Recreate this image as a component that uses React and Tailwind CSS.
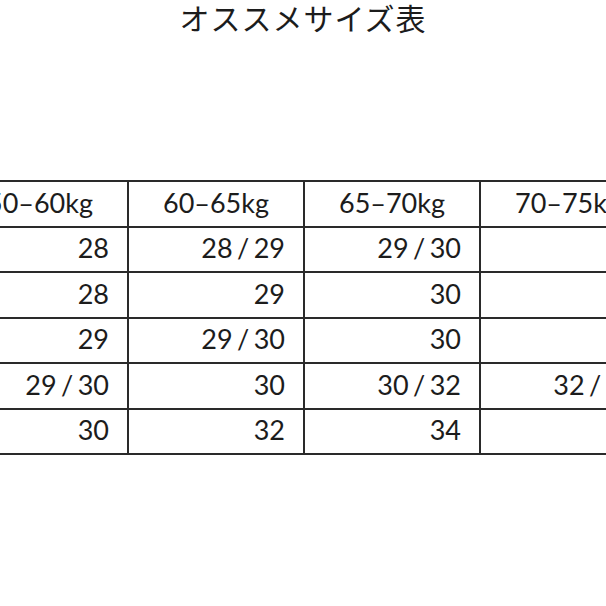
const headers = ["50–60kg", "60–65kg", "65–70kg", "70–75kg", "75–80kg"];

const rows = [
  ["28", "28 / 29", "29 / 30", "30", "32"],
  ["28", "29", "30", "30", "32"],
  ["29", "29 / 30", "30", "32", "32 / 34"],
  ["29 / 30", "30", "30 / 32", "32 / 34", "34"],
  ["30", "32", "34", "34", "36"],
];

export default function App() {
  return (
    <div
      className="w-[606px] h-[606px] overflow-hidden bg-white text-[#1c1c1c]"
      style={{ fontFamily: "Lato, 'Open Sans', 'Noto Sans CJK JP', sans-serif" }}
    >
      {/* title */}
      <div
        className="pt-[1px] text-center text-[30px] leading-[33px] tracking-[1px]"
        style={{ fontFamily: "'Noto Sans CJK JP', sans-serif" }}
      >
        オススメサイズ表
      </div>

      {/* size table, wider than the shot */}
      <div className="mt-[146px] ml-[-49px] w-[882px] grid grid-cols-[repeat(5,176px)] border-t-2 border-l-2 border-[#2a2a2a]">
        {headers.map((h) => (
          <div
            key={h}
            className="h-[45.5px] flex items-center justify-center border-r-2 border-b-2 border-[#2a2a2a] text-[27px] pb-[2px]"
          >
            {h}
          </div>
        ))}
        {rows.map((r, i) =>
          r.map((v, j) => (
            <div
              key={i + "-" + j}
              className="h-[45.5px] flex items-center justify-end pr-[18px] border-r-2 border-b-2 border-[#2a2a2a] text-[27px] pb-[2px] [word-spacing:-2.5px]"
            >
              {v}
            </div>
          ))
        )}
      </div>
    </div>
  );
}
